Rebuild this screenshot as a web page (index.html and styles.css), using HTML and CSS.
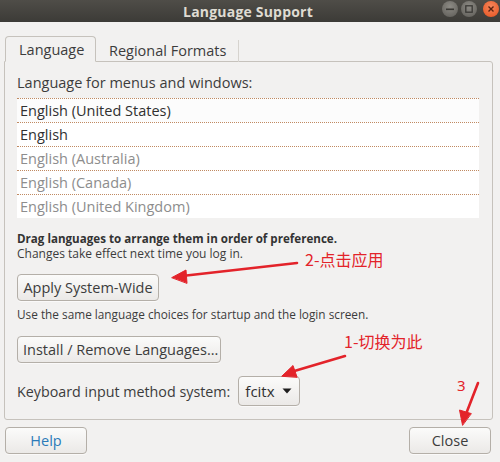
FILE: index.html
```html
<!DOCTYPE html>
<html>
<head>
<meta charset="utf-8">
<link rel="stylesheet" href="styles.css">
</head>
<body>
<div class="window">
  <div class="titlebar">
    <div></div>
    <div class="title">Language Support</div>
    <div class="winbtns">
      <span class="wb wb-min"><svg width="16" height="16" viewBox="0 0 16 16"><rect x="4" y="7.5" width="8" height="1.6" fill="#3a3935"/></svg></span>
      <span class="wb wb-max"><svg width="16" height="16" viewBox="0 0 16 16"><rect x="4.8" y="4.8" width="6.4" height="6.4" fill="none" stroke="#3a3935" stroke-width="1.3"/></svg></span>
      <span class="wb wb-close"><svg width="16" height="16" viewBox="0 0 16 16"><path d="M5.5 5.5 L10.5 10.5 M10.5 5.5 L5.5 10.5" stroke="#5a2210" stroke-width="1.4"/></svg></span>
    </div>
  </div>
  <div class="body">
    <div class="tabs">
      <div class="tab active">Language</div>
      <div class="tab">Regional Formats</div>
    </div>
    <div class="panel">
      <div class="label">Language for menus and windows:</div>
      <div class="list">
        <div class="row">English (United States)</div>
        <div class="row">English</div>
        <div class="row dim">English (Australia)</div>
        <div class="row dim">English (Canada)</div>
        <div class="row dim">English (United Kingdom)</div>
      </div>
      <div class="hint"><div class="hint-b">Drag languages to arrange them in order of preference.</div><div>Changes take effect next time you log in.</div></div>
      <div class="btnrow"><button class="btn apply">Apply System-Wide</button></div>
      <div class="hint2">Use the same language choices for startup and the login screen.</div>
      <div class="btnrow2"><button class="btn install">Install / Remove Languages...</button></div>
      <div class="kbrow">
        <span>Keyboard input method system:</span>
        <button class="btn combo">fcitx <svg width="10" height="6" viewBox="0 0 10 6"><path d="M0.5 0.5 L9.5 0.5 L5 5.5 Z" fill="#1e1e1e"/></svg></button>
      </div>
    </div>
    <div class="actions">
      <button class="btn help">Help</button>
      <button class="btn close">Close</button>
    </div>
  </div>
  <div class="note note2">2-点击应用</div>
  <div class="note note1">1-切换为此</div>
  <div class="note note3">3</div>
  <svg class="arrows" width="500" height="462" viewBox="0 0 500 462">
    <g stroke="#e3232a" stroke-width="2.6" stroke-linecap="round" fill="#e3232a">
      <line x1="297" y1="263" x2="182" y2="276"/>
      <path d="M172 277.5 L186 270 L187 283 Z" stroke-width="1"/>
      <line x1="345" y1="356" x2="291" y2="372"/>
      <path d="M282 376 L293 365.5 L297 377 Z" stroke-width="1"/>
      <line x1="478" y1="383" x2="466" y2="414"/>
      <path d="M462.5 425 L459.5 410 L471 413.5 Z" stroke-width="1"/>
    </g>
  </svg>
</div>
</body>
</html>
```
FILE: styles.css
```css
html, body {
  margin: 0;
  padding: 0;
}
body {
  background: #f2f1f0;
  font-family: "Open Sans", "Noto Sans", sans-serif;
  color: #3c3c3c;
}
.window {
  position: relative;
  width: 500px;
  height: 462px;
  overflow: hidden;
}
.titlebar {
  height: 22px;
  background: linear-gradient(#4f4d48, #3c3b37);
  display: grid;
  grid-template-columns: 1fr auto 1fr;
  align-items: center;
}
.title {
  color: #dfdbd2;
  font-weight: bold;
  font-size: 14px;
  letter-spacing: 0.2px;
  margin-left: -4px;
}
.winbtns {
  display: flex;
  justify-content: flex-end;
  gap: 3px;
  padding-right: 1px;
  margin-top: -4px;
}
.wb {
  width: 16px;
  height: 16px;
  border-radius: 50%;
  display: block;
}
.wb svg { display: block; }
.wb-min, .wb-max {
  background: radial-gradient(circle at 50% 35%, #8d8b85, #5d5b56);
}
.wb-close {
  margin-left: 3px;
  background: radial-gradient(circle at 50% 35%, #f7865b, #e5521f);
}
.body {
  padding: 14px 7px 0 4px;
}
.tabs {
  display: flex;
  height: 26px;
  padding-left: 1px;
  position: relative;
  z-index: 1;
  margin-bottom: -1px;
}
.tab {
  font-size: 14.5px;
  line-height: 26px;
  padding: 0 13px;
  color: #3c3c3c;
}
.tab.active {
  width: 91px;
  box-sizing: border-box;
  border: 1px solid #c6c2bc;
  border-bottom: 1px solid #f2f1f0;
  border-radius: 4px 4px 0 0;
  background: #f2f1f0;
  padding: 0 13px;
}
.tab + .tab {
  border-right: 1px solid #d6d3ce;
  margin-top: 4px;
  line-height: 22px;
  height: 22px;
  padding: 0 12px 0 13px;
}
.panel {
  border: 1px solid #c6c2bc;
  border-radius: 0 3px 3px 3px;
  height: 346px;
  padding: 11px 13px 0 12px;
  box-sizing: content-box;
}
.label {
  font-size: 14.5px;
  line-height: 20px;
  height: 25px;
}
.list {
  background: #ffffff;
}
.row {
  height: 23px;
  line-height: 23px;
  font-size: 14.5px;
  padding-left: 3px;
  border-top: 1px dotted #c08a62;
  color: #303030;
}
.row:first-child {
  background: #fcfcfc;
}
.row.dim {
  color: #8d8d8d;
}
.hint {
  font-size: 12px;
  line-height: 15px;
  margin-top: 13px;
  color: #3c3c3c;
}
.hint-b {
  font-weight: bold;
  font-size: 11.6px;
  color: #333;
}
.btnrow {
  margin-top: 13px;
}
.btn {
  font-family: "Open Sans", "Noto Sans", sans-serif;
  font-size: 14.5px;
  color: #3c3c3c;
  background: linear-gradient(#fbfbfa, #ebe9e7);
  border: 1px solid #b4afa8;
  border-radius: 4px;
  height: 27px;
  padding: 0 5px;
  white-space: nowrap;
  box-shadow: 0 1px 0 rgba(255,255,255,0.6);
}
.apply { width: 142px; }
.install { width: 204px; }
.hint2 {
  font-size: 11.8px;
  line-height: 15px;
  margin-top: 6px;
}
.btnrow2 {
  margin-top: 14px;
}
.kbrow {
  display: flex;
  align-items: center;
  gap: 8px;
  margin-top: 13px;
  font-size: 14.3px;
}
.combo {
  height: 30px;
  width: 62px;
  display: flex;
  align-items: center;
  gap: 7px;
  padding: 0 0 0 6px;
  font-size: 15px;
  color: #303030;
}
.actions {
  display: flex;
  justify-content: space-between;
  margin-top: 7px;
  padding-left: 1px;
}
.help, .close {
  width: 82px;
  height: 27px;
}
.help { color: #2b7bb9; }
.close { margin-right: 2px; }
.note {
  position: absolute;
  color: #e3232a;
  font-family: "Noto Sans CJK SC", sans-serif;
  font-size: 16px;
  line-height: 20px;
}
.note2 { left: 305px; top: 249px; }
.note1 { left: 344px; top: 331px; }
.note3 { left: 457px; top: 375px; font-family: "Noto Sans", sans-serif; font-size: 15px; }
.arrows {
  position: absolute;
  left: 0;
  top: 0;
  pointer-events: none;
}
```
